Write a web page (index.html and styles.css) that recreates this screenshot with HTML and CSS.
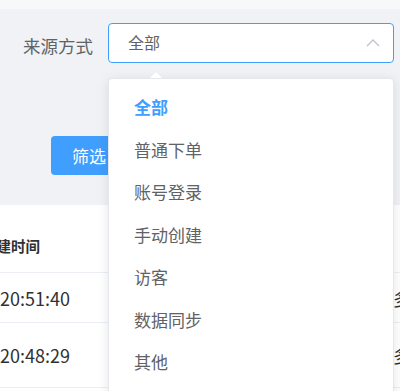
FILE: index.html
```html
<!DOCTYPE html>
<html lang="zh">

<head>
    <meta charset="utf-8">
    <meta name="viewport" content="width=device-width, initial-scale=1.0">
    <title>订单筛选</title>
    <link rel="stylesheet" href="styles.css">
</head>

<body>

    <div class="page">
        <div class="filters">
            <div class="form-row">
                <label class="form-label">来源方式</label>
                <div class="select is-open">
                    <span class="select-value">全部</span>
                    <svg class="select-arrow" width="14" height="8" viewBox="0 0 14 8">
                        <path d="M1 7 L7 1 L13 7" fill="none" stroke="#c0c4cc" stroke-width="1.4"/>
                    </svg>
                    <div class="dropdown">
                        <span class="dropdown-arrow"></span>
                        <ul class="options">
                            <li class="option selected">全部</li>
                            <li class="option">普通下单</li>
                            <li class="option">账号登录</li>
                            <li class="option">手动创建</li>
                            <li class="option">访客</li>
                            <li class="option">数据同步</li>
                            <li class="option">其他</li>
                        </ul>
                    </div>
                </div>
            </div>
            <div class="actions">
                <button class="btn-primary">筛选</button>
            </div>
        </div>

        <div class="table-card">
            <table class="data-table">
                <colgroup>
                    <col class="col-time">
                    <col class="col-mid">
                    <col class="col-end">
                </colgroup>
                <thead>
                    <tr>
                        <th class="th-time">创建时间</th>
                        <th></th>
                        <th></th>
                    </tr>
                </thead>
                <tbody>
                    <tr class="row-short">
                        <td class="td-time">20:51:40</td>
                        <td></td>
                        <td class="td-end">多</td>
                    </tr>
                    <tr class="row-tall">
                        <td class="td-time">20:48:29</td>
                        <td></td>
                        <td class="td-end">多</td>
                    </tr>
                </tbody>
            </table>
        </div>
    </div>

</body>

</html>
```

FILE: styles.css
```css
body {
    margin: 0;
    font-family: "Noto Sans CJK SC", "Noto Sans", sans-serif;
    background-color: #fff;
    overflow: hidden;
}

.page {
    width: 400px;
    height: 391px;
    overflow: hidden;
}

.filters {
    background-color: #f0f2f5;
    border-top: 9px solid #f7f8fa;
    padding-top: 14px;
    padding-bottom: 30px;
}

.form-row {
    display: flex;
    align-items: center;
    height: 40px;
}

.form-label {
    width: 108px;
    padding-right: 15px;
    box-sizing: border-box;
    text-align: right;
    font-size: 17.5px;
    color: #606266;
    padding-top: 4px;
}

.select {
    position: relative;
    width: 286px;
    height: 40px;
    box-sizing: border-box;
    border: 1px solid #409eff;
    border-radius: 4px;
    background-color: #fff;
    display: flex;
    align-items: center;
    padding-left: 19px;
    padding-right: 13px;
}

.select-value {
    flex: 1;
    font-size: 16px;
    color: #606266;
    padding-bottom: 3px;
}

.select-arrow {
    display: block;
}

.dropdown {
    position: absolute;
    top: 54px;
    left: -1px;
    width: 286px;
    height: 340px;
    background-color: #fff;
    border: 1px solid #e4e7ed;
    border-radius: 4px;
    box-shadow: 0 2px 12px rgba(0, 0, 0, 0.1);
    box-sizing: border-box;
    z-index: 5;
}

.dropdown-arrow {
    position: absolute;
    top: -7px;
    left: 41px;
    width: 0;
    height: 0;
    border-left: 6px solid transparent;
    border-right: 6px solid transparent;
    border-bottom: 6px solid #fff;
    filter: drop-shadow(0 -1px 0 #ebeef5);
}

.options {
    list-style: none;
    margin: 0;
    padding: 7px 0 0 0;
}

.option {
    height: 42.5px;
    line-height: 42.5px;
    padding-left: 25px;
    font-size: 17px;
    color: #606266;
}

.option.selected {
    color: #409eff;
    font-weight: bold;
}

.actions {
    margin-top: 73px;
    padding-left: 51px;
}

.btn-primary {
    border: none;
    border-radius: 4px;
    background-color: #409eff;
    color: #fff;
    font-family: "Noto Sans CJK SC", sans-serif;
    font-size: 17px;
    height: 39px;
    width: 76px;
    padding: 0;
}

.table-card {
    background-color: #fff;
    padding-top: 13px;
}

.data-table {
    border-collapse: collapse;
    table-layout: fixed;
    width: 420px;
}

.col-time {
    width: 97px;
}

.col-mid {
    width: 296px;
}

.data-table th {
    height: 54px;
    text-align: left;
    font-size: 14.5px;
    color: #303133;
    border-bottom: 1px solid #ebeef5;
    padding: 0;
    white-space: nowrap;
    overflow: hidden;
}

.th-time {
    text-indent: -18px;
}

.data-table td {
    border-bottom: 1px solid #ebeef5;
    padding: 0;
    font-size: 18px;
    color: #303133;
    white-space: nowrap;
    overflow: hidden;
}

.row-short td {
    height: 49px;
}

.row-tall td {
    height: 64px;
}

.td-time {
    padding-left: 3px;
}

.td-end {
    padding-left: 1px;
}
```
